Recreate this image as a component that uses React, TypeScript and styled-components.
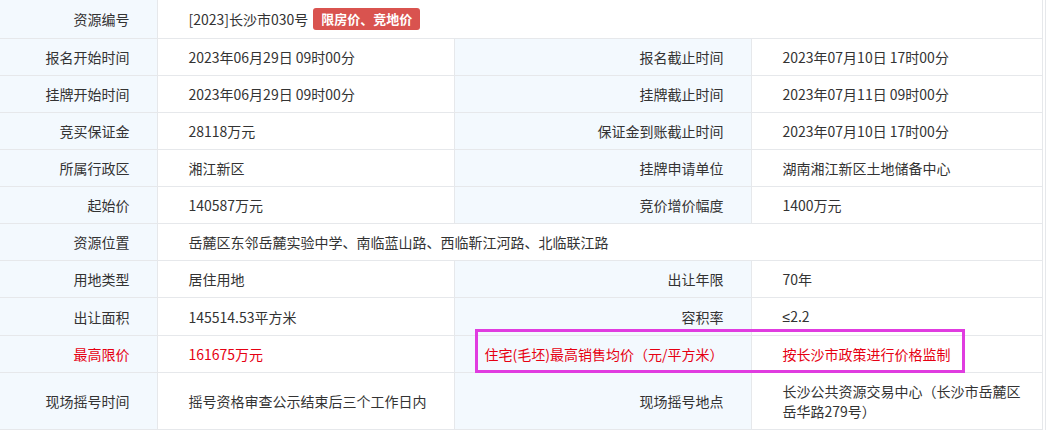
import React from "react";
import styled, { createGlobalStyle } from "styled-components";

const GlobalStyle = createGlobalStyle`
  html, body {
    margin: 0;
    padding: 0;
    background: #ffffff;
  }
  body {
    font-family: "Noto Sans CJK SC", "Microsoft YaHei", sans-serif;
    font-size: 14px;
    color: #333333;
  }
`;

const Frame = styled.div`
  width: 1046px;
  border-right: 1px solid #e6e8eb;
  box-sizing: border-box;
`;

const Table = styled.table`
  width: 1042px;
  border-collapse: collapse;
  table-layout: fixed;
`;

const Row = styled.tr`
  border-bottom: 1px solid #e6e8eb;
`;

const Label = styled.th<{ $red?: boolean }>`
  position: relative;
  background: #f3f9fe;
  font-weight: normal;
  text-align: right;
  padding: 8px 27px 8px 8px;
  height: 20px;
  line-height: 20px;
  border-right: 1px solid #e6e8eb;
  color: ${(p) => (p.$red ? "#e60012" : "#333333")};
  white-space: nowrap;
`;

const Value = styled.td<{ $red?: boolean }>`
  text-align: left;
  padding: 8px 10px 8px 31px;
  line-height: 20px;
  border-right: 1px solid #e6e8eb;
  color: ${(p) => (p.$red ? "#e60012" : "#333333")};
`;

const Badge = styled.span`
  display: inline-block;
  margin-left: 5px;
  padding: 0 8px;
  height: 22px;
  line-height: 22px;
  border-radius: 3px;
  background: #d9534f;
  color: #ffffff;
  font-size: 13px;
  font-weight: bold;
  vertical-align: 1px;
`;

const Sym = styled.span`
  font-family: "Liberation Sans", "DejaVu Sans", sans-serif;
`;

const Highlight = styled.div`
  position: absolute;
  left: 20px;
  top: -7px;
  width: 490px;
  height: 44px;
  box-sizing: border-box;
  border: 3px solid #e03ce0;
  pointer-events: none;
`;

type Cell = { label: string; value: React.ReactNode; red?: boolean };

const pairRows: [Cell, Cell][] = [
  [
    { label: "报名开始时间", value: "2023年06月29日 09时00分" },
    { label: "报名截止时间", value: "2023年07月10日 17时00分" },
  ],
  [
    { label: "挂牌开始时间", value: "2023年06月29日 09时00分" },
    { label: "挂牌截止时间", value: "2023年07月11日 09时00分" },
  ],
  [
    { label: "竞买保证金", value: "28118万元" },
    { label: "保证金到账截止时间", value: "2023年07月10日 17时00分" },
  ],
  [
    { label: "所属行政区", value: "湘江新区" },
    { label: "挂牌申请单位", value: "湖南湘江新区土地储备中心" },
  ],
  [
    { label: "起始价", value: "140587万元" },
    { label: "竞价增价幅度", value: "1400万元" },
  ],
];

const pairRows2: [Cell, Cell][] = [
  [
    { label: "用地类型", value: "居住用地" },
    { label: "出让年限", value: "70年" },
  ],
  [
    { label: "出让面积", value: "145514.53平方米" },
    {
      label: "容积率",
      value: (
        <>
          <Sym>≤</Sym>2.2
        </>
      ),
    },
  ],
];

const PairRow: React.FC<{ cells: [Cell, Cell]; highlight?: boolean }> = ({
  cells,
  highlight,
}) => (
  <Row>
    <Label $red={cells[0].red}>{cells[0].label}</Label>
    <Value $red={cells[0].red}>{cells[0].value}</Value>
    <Label $red={cells[1].red}>
      {highlight && <Highlight />}
      {cells[1].label}
    </Label>
    <Value $red={cells[1].red}>{cells[1].value}</Value>
  </Row>
);

export default function App() {
  return (
    <>
      <GlobalStyle />
      <Frame>
        <Table>
          <colgroup>
            <col style={{ width: "157px" }} />
            <col style={{ width: "297px" }} />
            <col style={{ width: "297px" }} />
            <col style={{ width: "291px" }} />
          </colgroup>
          <tbody>
            <Row>
              <Label>资源编号</Label>
              <Value colSpan={3}>
                [2023]长沙市030号<Badge>限房价、竞地价</Badge>
              </Value>
            </Row>
            {pairRows.map((r) => (
              <PairRow key={r[0].label} cells={r} />
            ))}
            <Row>
              <Label>资源位置</Label>
              <Value colSpan={3}>
                岳麓区东邻岳麓实验中学、南临蓝山路、西临靳江河路、北临联江路
              </Value>
            </Row>
            {pairRows2.map((r) => (
              <PairRow key={r[0].label} cells={r} />
            ))}
            <PairRow
              highlight
              cells={[
                { label: "最高限价", value: "161675万元", red: true },
                {
                  label: "住宅(毛坯)最高销售均价（元/平方米）",
                  value: "按长沙市政策进行价格监制",
                  red: true,
                },
              ]}
            />
            <PairRow
              cells={[
                { label: "现场摇号时间", value: "摇号资格审查公示结束后三个工作日内" },
                {
                  label: "现场摇号地点",
                  value: (
                    <>
                      长沙公共资源交易中心（长沙市岳麓区
                      <br />
                      岳华路279号）
                    </>
                  ),
                },
              ]}
            />
          </tbody>
        </Table>
      </Frame>
    </>
  );
}
